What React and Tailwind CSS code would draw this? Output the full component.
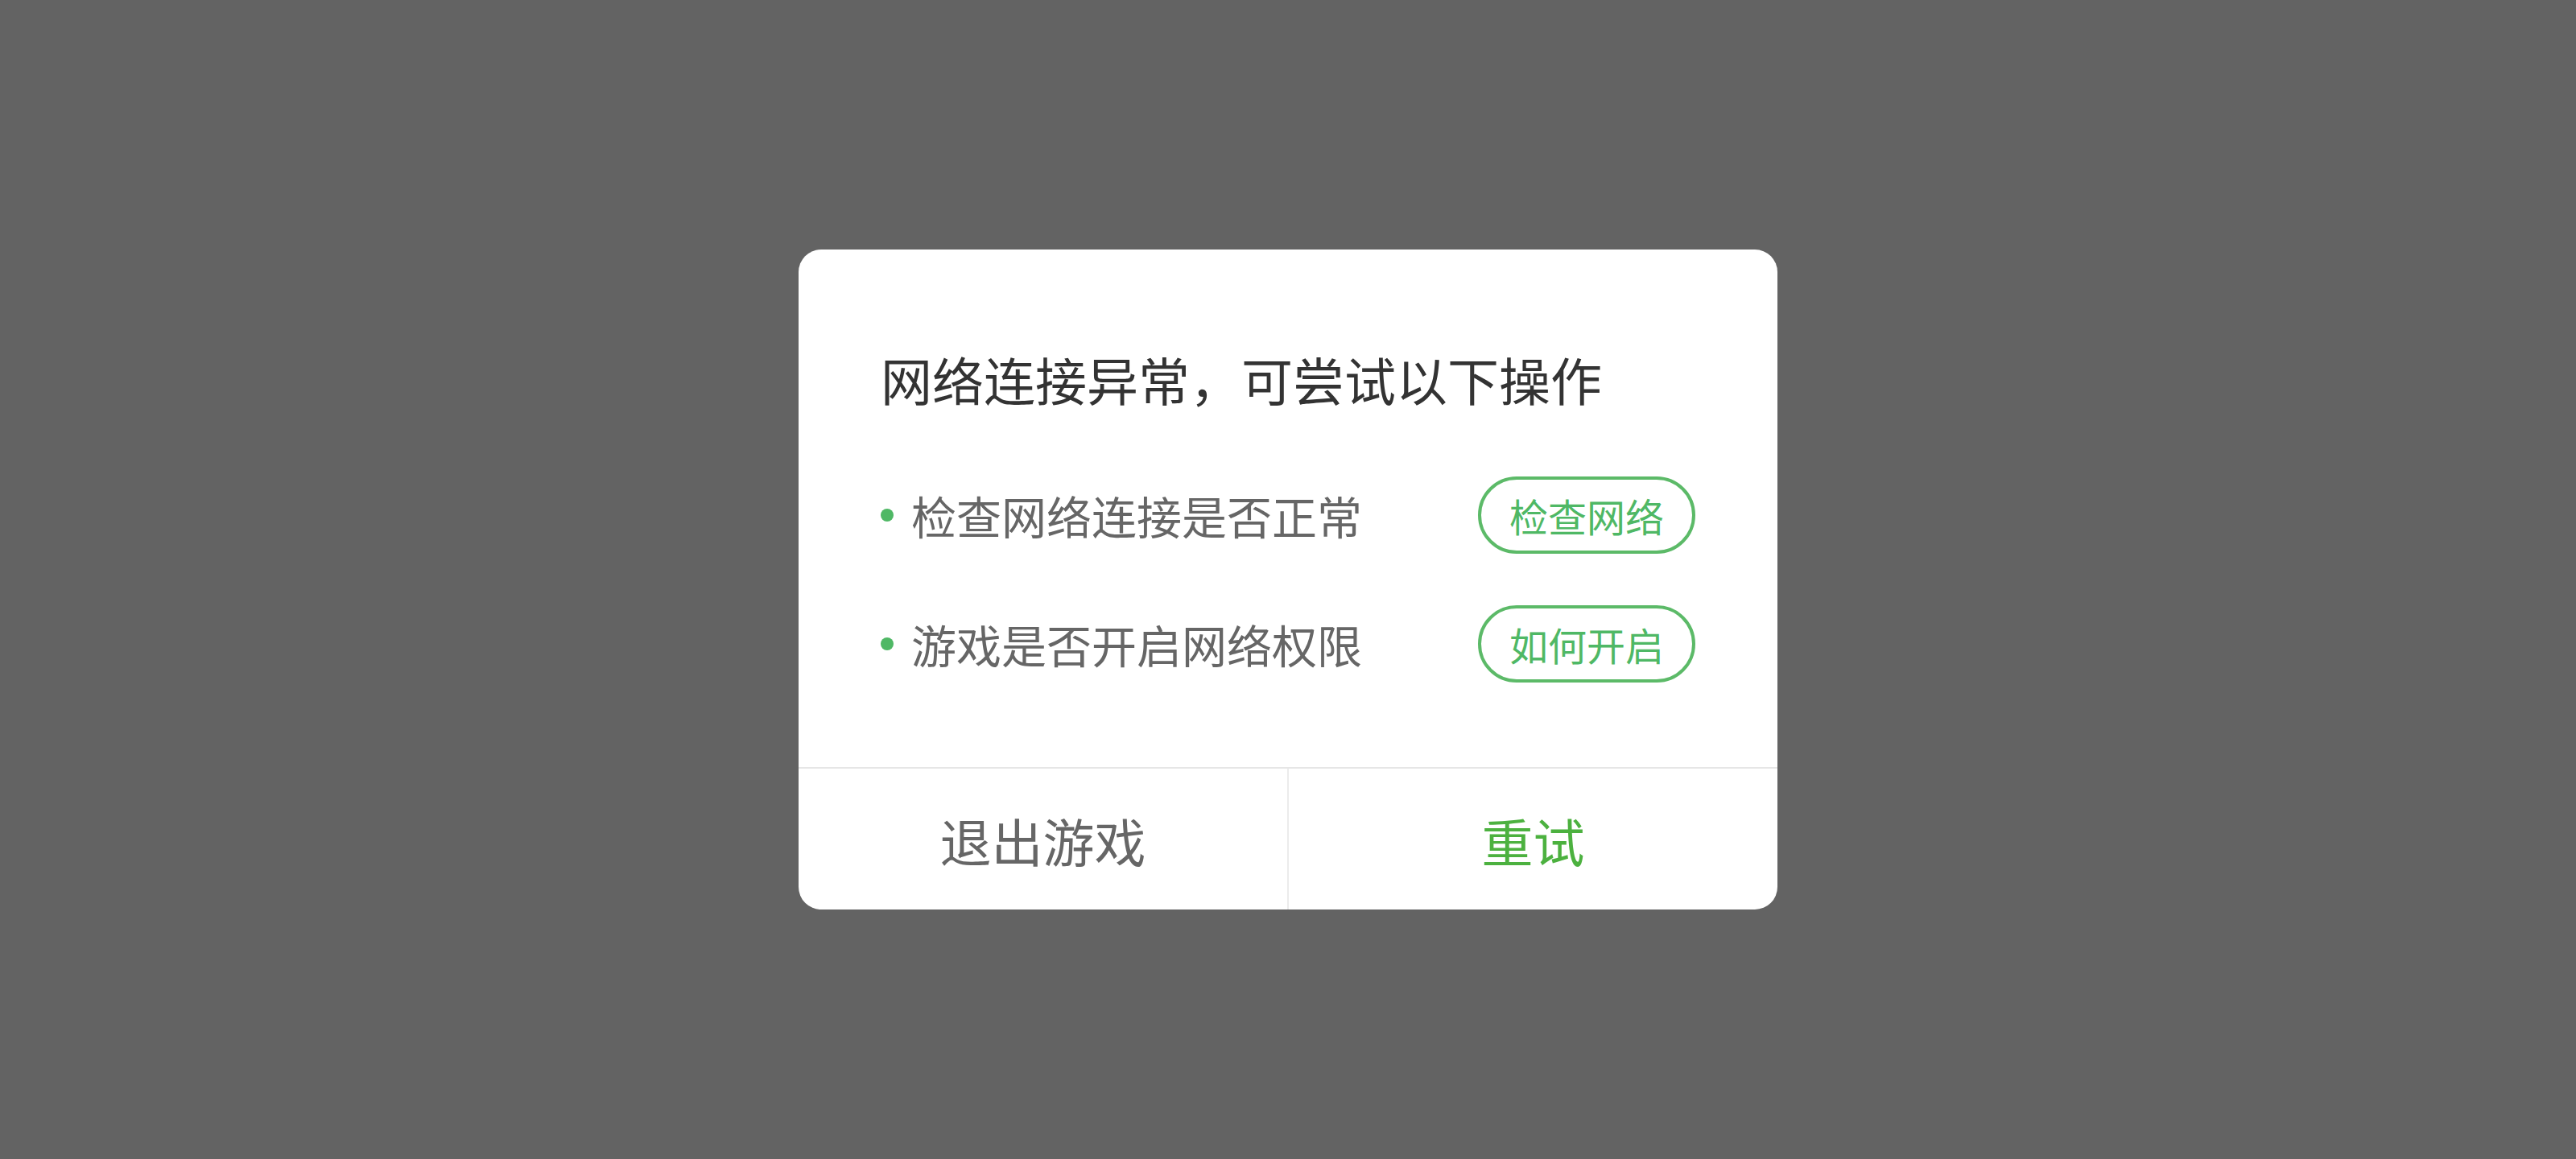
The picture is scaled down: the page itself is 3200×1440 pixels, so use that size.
import React from "react";

const tips = [
  { text: "检查网络连接是否正常", action: "检查网络" },
  { text: "游戏是否开启网络权限", action: "如何开启" },
];

export default function App() {
  return (
    <div
      className="w-[3200px] h-[1440px] bg-[#636363] flex items-center justify-center"
      style={{ fontFamily: '"Noto Sans CJK SC", "Noto Sans", sans-serif' }}
    >
      {/* Dialog */}
      <div className="w-[1216px] h-[820px] bg-white rounded-[28px] overflow-hidden flex flex-col">
        {/* Content */}
        <div className="flex-1 pt-[115px] px-[104px]">
          <h2 className="text-[64px] leading-[90px] text-[#333333] font-normal -ml-[2px]">
            网络连接异常，可尝试以下操作
          </h2>

          <div className="mt-[75px] flex flex-col gap-[60px]">
            {tips.map((tip) => (
              <div key={tip.text} className="h-[100px] flex items-center justify-between">
                <div className="flex items-center">
                  <span className="w-[16px] h-[16px] rounded-full bg-[#4fb865] -ml-[2px] mr-[22px]" />
                  <span className="text-[56px] leading-none text-[#666666]">{tip.text}</span>
                </div>
                <button className="w-[270px] h-[96px] -mr-[2px] rounded-full border-[4px] border-[#5cba68] text-[48px] leading-none text-[#4fb865] flex items-center justify-center">
                  {tip.action}
                </button>
              </div>
            ))}
          </div>
        </div>

        {/* Footer */}
        <div className="h-[177px] border-t-2 border-[#e6e6e6] flex">
          <button className="flex-1 border-r-2 border-[#ececec] text-[64px] leading-none text-[#666666] flex items-center justify-center">
            退出游戏
          </button>
          <button className="flex-1 text-[64px] leading-none text-[#4cb13f] flex items-center justify-center">
            重试
          </button>
        </div>
      </div>
    </div>
  );
}
